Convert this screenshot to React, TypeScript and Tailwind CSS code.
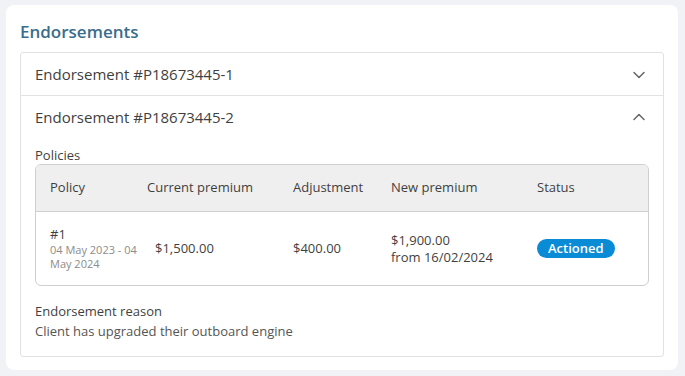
import React from "react";
import { ChevronDown, ChevronUp } from "lucide-react";

const font = { fontFamily: '"Open Sans", "Liberation Sans", sans-serif' };

function AccordionHeader({ title, open }: { title: string; open?: boolean }) {
  return (
    <div className="flex h-[42px] items-center justify-between pl-[14px] pr-[14px]">
      <span className="text-[15px] text-[#3f3f3f]">{title}</span>
      {open ? (
        <ChevronUp className="h-5 w-5 text-[#666]" strokeWidth={1.8} />
      ) : (
        <ChevronDown className="mt-[2px] h-5 w-5 text-[#666]" strokeWidth={1.8} />
      )}
    </div>
  );
}

export default function App() {
  return (
    <div className="min-h-[376px] bg-[#f1f2f5] pt-[5px] pl-[6px] pr-[7px]" style={font}>
      <div className="h-[365px] rounded-lg bg-white px-[14px] pt-[17px]">
        <h2 className="mb-[10px] text-[17px] font-semibold leading-5 text-[#3a6d8c]">Endorsements</h2>
        <div className="rounded-[3px] border border-[#e2e2e2]">
          <AccordionHeader title="Endorsement #P18673445-1" />
          <div className="border-t border-[#e2e2e2]">
            <AccordionHeader title="Endorsement #P18673445-2" open />
            <div className="px-[14px] pb-[15px] pt-[8px]">
              <div className="text-[13px] leading-[18px] text-[#3f3f3f]">Policies</div>
              <div className="overflow-hidden rounded-md border border-[#cfcfcf] text-[13px] text-[#3f3f3f]">
                <div className="grid h-[47px] grid-cols-[97px_146px_98px_146px_1fr] items-center border-b border-[#cfcfcf] bg-[#efefef] pl-[14px]">
                  <span>Policy</span>
                  <span>Current premium</span>
                  <span>Adjustment</span>
                  <span>New premium</span>
                  <span>Status</span>
                </div>
                <div className="grid h-[73px] grid-cols-[105px_138px_98px_146px_1fr] items-center pl-[14px]">
                  <div>
                    <div className="leading-[16px]">#1</div>
                    <div className="pt-[1px] text-[11px] leading-[14px] text-[#8c8c8c]">
                      <div>04 May 2023 - 04</div>
                      <div>May 2024</div>
                    </div>
                  </div>
                  <span>$1,500.00</span>
                  <span>$400.00</span>
                  <div className="leading-[17px]">
                    <div>$1,900.00</div>
                    <div>from 16/02/2024</div>
                  </div>
                  <div>
                    <span className="inline-flex h-[19px] items-center rounded-full bg-[#0a8bd6] px-[11px] text-[13px] font-semibold text-white">
                      Actioned
                    </span>
                  </div>
                </div>
              </div>
              <div className="mt-[15px] text-[13px] leading-5 text-[#3f3f3f]">Endorsement reason</div>
              <div className="text-[13px] leading-5 text-[#555]">Client has upgraded their outboard engine</div>
            </div>
          </div>
        </div>
      </div>
    </div>
  );
}
